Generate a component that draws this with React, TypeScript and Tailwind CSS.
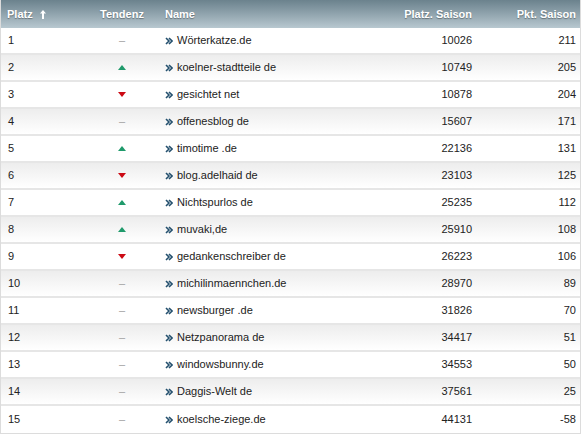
import React from "react";

type Trend = "up" | "down" | "same";

interface Row {
  platz: number;
  trend: Trend;
  name: string;
  saison: number;
  pkt: number;
}

const rows: Row[] = [
  { platz: 1, trend: "same", name: "Wörterkatze.de", saison: 10026, pkt: 211 },
  { platz: 2, trend: "up", name: "koelner-stadtteile de", saison: 10749, pkt: 205 },
  { platz: 3, trend: "down", name: "gesichtet net", saison: 10878, pkt: 204 },
  { platz: 4, trend: "same", name: "offenesblog de", saison: 15607, pkt: 171 },
  { platz: 5, trend: "up", name: "timotime .de", saison: 22136, pkt: 131 },
  { platz: 6, trend: "down", name: "blog.adelhaid de", saison: 23103, pkt: 125 },
  { platz: 7, trend: "up", name: "Nichtspurlos de", saison: 25235, pkt: 112 },
  { platz: 8, trend: "up", name: "muvaki,de", saison: 25910, pkt: 108 },
  { platz: 9, trend: "down", name: "gedankenschreiber de", saison: 26223, pkt: 106 },
  { platz: 10, trend: "same", name: "michilinmaennchen.de", saison: 28970, pkt: 89 },
  { platz: 11, trend: "same", name: "newsburger .de", saison: 31826, pkt: 70 },
  { platz: 12, trend: "same", name: "Netzpanorama de", saison: 34417, pkt: 51 },
  { platz: 13, trend: "same", name: "windowsbunny.de", saison: 34553, pkt: 50 },
  { platz: 14, trend: "same", name: "Daggis-Welt de", saison: 37561, pkt: 25 },
  { platz: 15, trend: "same", name: "koelsche-ziege.de", saison: 44131, pkt: -58 },
];

const cols = "grid grid-cols-[85px_72px_243px_78px_103px]";

// Trend marker
const TrendIcon: React.FC<{ trend: Trend }> = ({ trend }) => {
  if (trend === "up") {
    return (
      <svg width="8" height="5" viewBox="0 0 8 5">
        <polygon points="4,0 8,5 0,5" fill="#1f9a6b" />
      </svg>
    );
  }
  if (trend === "down") {
    return (
      <svg width="8" height="5" viewBox="0 0 8 5">
        <polygon points="0,0 8,0 4,5" fill="#cc0a14" />
      </svg>
    );
  }
  return <span className="text-[#a0a0a0]">–</span>;
};

const Chevrons = () => (
  <svg width="8" height="8" viewBox="0 0 8 8" className="mr-[4px] mt-[1px] shrink-0">
    <path d="M1 1 L4 4 L1 7 M4 1 L7 4 L4 7" stroke="#24506e" strokeWidth="1.6" fill="none" />
  </svg>
);

export default function App() {
  return (
    <div className="w-[583px] h-[435px] bg-white font-['Liberation_Sans',Arial,sans-serif] text-[11px] text-[#222]">
      <div className="w-[581px] border-l border-r border-b border-[#dcdcdc]">
        {/* Header */}
        <div
          className={`${cols} h-[28px] items-center bg-gradient-to-b from-[#6b828d] to-[#b8c8d0] text-white font-bold [text-shadow:0_1px_1px_rgba(0,0,0,0.35)]`}
        >
          <div className="pl-[6px] flex items-center">
            Platz
            <svg width="6" height="9" viewBox="0 0 6 9" className="ml-[7px]">
              <path d="M3 0 L6 3.5 L4 3.5 L4 9 L2 9 L2 3.5 L0 3.5 Z" fill="#ffffff" />
            </svg>
          </div>
          <div className="text-center">Tendenz</div>
          <div className="pl-[7px]">Name</div>
          <div className="text-right pr-[7px]">Platz. Saison</div>
          <div className="text-right pr-[6px]">Pkt. Saison</div>
        </div>

        {/* Rows */}
        {rows.map((r, i) => (
          <div
            key={r.platz}
            className={`${cols} h-[27px] items-center border-b-2 border-[#e6e6e6] last:border-b-0 ${
              i % 2 === 1 ? "bg-gradient-to-b from-[#ededed] to-white" : "bg-white"
            }`}
          >
            <div className="pl-[7px]">{r.platz}</div>
            <div className="flex justify-center items-center">
              <TrendIcon trend={r.trend} />
            </div>
            <div className="pl-[7px] flex items-center">
              <Chevrons />
              <span>{r.name}</span>
            </div>
            <div className="text-right pr-[7px]">{r.saison}</div>
            <div className="text-right pr-[6px]">{r.pkt}</div>
          </div>
        ))}
      </div>
    </div>
  );
}
